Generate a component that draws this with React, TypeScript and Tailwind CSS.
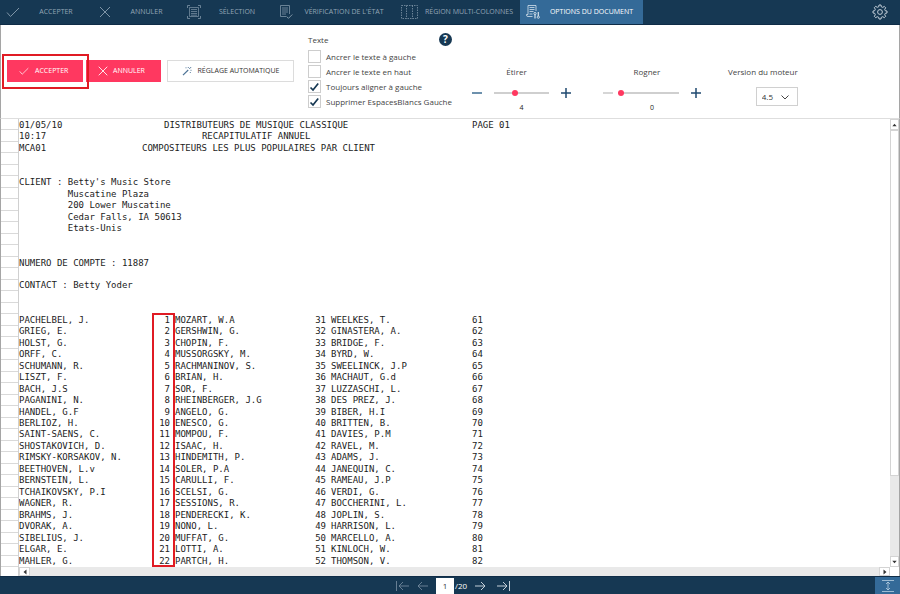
import React, { useState } from 'react';

interface IconProps {
  className?: string;
  children: React.ReactNode;
  box?: string;
}

const Icon: React.FC<IconProps> = ({ className = 'size-3.5', children, box = '0 0 14 14' }) => (
  <svg viewBox={box} className={`shrink-0 ${className}`} fill="none" stroke="currentColor" aria-hidden="true">
    {children}
  </svg>
);

const CheckIcon = ({ className }: { className?: string }) => (
  <Icon className={className}><path d="M1 7.5 4.5 11.5 13 3" /></Icon>
);

const CrossIcon = ({ className }: { className?: string }) => (
  <Icon className={className}><path d="M2 2 12 12M12 2 2 12" /></Icon>
);

const SelectionIcon = () => (
  <Icon>
    <path d="M2.5 2.5h9v9h-9zM4 4.5h6M4 6.5h6M4 8.5h6M4 10.2h6" strokeWidth="0.7" />
    <path d="M.5 3V.5H3M11 .5h2.5V3M.5 11v2.5H3M11 13.5h2.5V11" strokeWidth="0.8" />
  </Icon>
);

const VerifyIcon = () => (
  <Icon>
    <path d="M7 11.5H1.5v-11h9V9M3 3h6M3 5h6M3 7h6M3 9h4" strokeWidth="0.8" />
    <path d="M7.5 11.5 9.5 13.3 13.3 9.5" />
  </Icon>
);

const ColumnsIcon = () => (
  <Icon className="w-[17px] h-3.5" box="0 0 17 14">
    <path d="M.5.5h16v13H.5zM5.5.5v13M11.5.5v13" strokeDasharray="1.5 1" strokeWidth="0.8" />
  </Icon>
);

const OptionsIcon = () => (
  <Icon>
    <path d="M6.500 11.500H2A1.500 1.500 0 0 1 .5 10V9.500H2M2 9.500V.5h8V6M3.500 2.500h5M3.500 4.500h5M3.500 6.500h4M3.500 9h3" strokeWidth="0.8" />
    <path d="M9 9.500v4M12.300 7v4" strokeWidth="1.200" />
    <circle cx="9" cy="8.500" r="1.100" strokeWidth="0.9" />
    <circle cx="12.300" cy="12.200" r="1.100" strokeWidth="0.9" />
  </Icon>
);

const GearIcon = () => (
  <Icon className="size-4" box="0 0 16 16">
    <path
      d="M6.700 2.800 7 1h2l.3 1.800 1.500.6 1.500-1 1.400 1.400-1 1.500.6 1.500L15 7v2l-1.700.3-.6 1.500 1 1.500-1.400 1.400-1.500-1-1.500.6L9 15H7l-.3-1.700-1.500-.6-1.500 1-1.400-1.400 1-1.500-.6-1.500L1 9V7l1.700-.3.600-1.500-1-1.500 1.400-1.400 1.500 1z"
      strokeLinejoin="round"
    />
    <circle cx="8" cy="8" r="2.400" />
  </Icon>
);

const WandIcon = () => (
  <Icon className="size-2.5 text-[#4d7396]" box="0 0 10 10">
    <path d="M1 9.200 6.200 4" strokeWidth="1.200" />
    <path d="M7.200 3 9.200 1M3.500 1.800h1M6.300 1v1M8.500 4.300h1M8.300 6v1" strokeWidth="0.9" />
  </Icon>
);

const tabs = [
  { label: 'ACCEPTER', icon: <CheckIcon />, width: 'w-[92px]' },
  { label: 'ANNULER', icon: <CrossIcon />, width: 'w-[89px]' },
  { label: 'SÉLECTION', icon: <SelectionIcon />, width: 'w-[92px]' },
  { label: "VÉRIFICATION DE L'ÉTAT", icon: <VerifyIcon />, width: 'w-[122px]' },
  { label: 'RÉGION MULTI-COLONNES', icon: <ColumnsIcon />, width: 'w-[125px]' },
  { label: 'OPTIONS DU DOCUMENT', icon: <OptionsIcon />, width: 'w-[123px]', active: true },
];

const textOptions = [
  { label: 'Ancrer le texte à gauche', checked: false },
  { label: 'Ancrer le texte en haut', checked: false },
  { label: 'Toujours aligner à gauche', checked: true },
  { label: 'Supprimer EspacesBlancs Gauche', checked: true },
];

const headerLines = [
  ['01/05/10', 'DISTRIBUTEURS DE MUSIQUE CLASSIQUE', 'PAGE 01'],
  ['10:17', '       RECAPITULATIF ANNUEL', ''],
  ['MCA01', 'COMPOSITEURS LES PLUS POPULAIRES PAR CLIENT', ''],
];

const clientLines = [
  '',
  '',
  "CLIENT : Betty's Music Store",
  '         Muscatine Plaza',
  '         200 Lower Muscatine',
  '         Cedar Falls, IA 50613',
  '         Etats-Unis',
  '',
  '',
  'NUMERO DE COMPTE : 11887',
  '',
  'CONTACT : Betty Yoder',
  '',
  '',
];

const composers = [
  ['PACHELBEL, J.', 'MOZART, W.A', 'WEELKES, T.'],
  ['GRIEG, E.', 'GERSHWIN, G.', 'GINASTERA, A.'],
  ['HOLST, G.', 'CHOPIN, F.', 'BRIDGE, F.'],
  ['ORFF, C.', 'MUSSORGSKY, M.', 'BYRD, W.'],
  ['SCHUMANN, R.', 'RACHMANINOV, S.', 'SWEELINCK, J.P'],
  ['LISZT, F.', 'BRIAN, H.', 'MACHAUT, G.d'],
  ['BACH, J.S', 'SOR, F.', 'LUZZASCHI, L.'],
  ['PAGANINI, N.', 'RHEINBERGER, J.G', 'DES PREZ, J.'],
  ['HANDEL, G.F', 'ANGELO, G.', 'BIBER, H.I'],
  ['BERLIOZ, H.', 'ENESCO, G.', 'BRITTEN, B.'],
  ['SAINT-SAENS, C.', 'MOMPOU, F.', 'DAVIES, P.M'],
  ['SHOSTAKOVICH, D.', 'ISAAC, H.', 'RAVEL, M.'],
  ['RIMSKY-KORSAKOV, N.', 'HINDEMITH, P.', 'ADAMS, J.'],
  ['BEETHOVEN, L.v', 'SOLER, P.A', 'JANEQUIN, C.'],
  ['BERNSTEIN, L.', 'CARULLI, F.', 'RAMEAU, J.P'],
  ['TCHAIKOVSKY, P.I', 'SCELSI, G.', 'VERDI, G.'],
  ['WAGNER, R.', 'SESSIONS, R.', 'BOCCHERINI, L.'],
  ['BRAHMS, J.', 'PENDERECKI, K.', 'JOPLIN, S.'],
  ['DVORAK, A.', 'NONO, L.', 'HARRISON, L.'],
  ['SIBELIUS, J.', 'MUFFAT, G.', 'MARCELLO, A.'],
  ['ELGAR, E.', 'LOTTI, A.', 'KINLOCH, W.'],
  ['MAHLER, G.', 'PARTCH, H.', 'THOMSON, V.'],
];

interface StepSliderProps {
  label: string;
  max: number;
  initial: number;
  trackClass: string;
}

const StepSlider: React.FC<StepSliderProps> = ({ label, max, initial, trackClass }) => {
  const [value, setValue] = useState(initial);
  const id = `slider-${label}`;

  return (
    <div className="flex flex-col items-center pt-[41px]">
      <label htmlFor={id} className="h-3 pr-2.5 leading-3">{label}</label>
      <div className="mt-2 flex h-3.5 items-center text-[#1f4a70]">
        <button
          type="button"
          aria-label={`${label} moins`}
          disabled={value === 0}
          onClick={() => setValue(value - 1)}
          className="text-[#3c6c92] disabled:text-[#c9c9c9]"
        >
          <Icon className="size-2.5" box="0 0 10 10"><path d="M0 5h10" strokeWidth="1.500" /></Icon>
        </button>
        <input
          id={id}
          type="range"
          min={0}
          max={max}
          value={value}
          onChange={(e) => setValue(Number(e.target.value))}
          className={`${trackClass} mr-3 h-0.5 appearance-none bg-[#cfcfcf] [&::-webkit-slider-thumb]:size-1.5 [&::-webkit-slider-thumb]:appearance-none [&::-webkit-slider-thumb]:rounded-full [&::-webkit-slider-thumb]:bg-[#ff3860]`}
        />
        <button type="button" aria-label={`${label} plus`} onClick={() => setValue(Math.min(max, value + 1))}>
          <Icon className="size-2.5" box="0 0 10 10"><path d="M0 5h10M5 0v10" strokeWidth="1.500" /></Icon>
        </button>
      </div>
      <output htmlFor={id} className="mt-0.5 text-[7px] leading-3 text-[#222]">{value}</output>
    </div>
  );
};

const TopBar = () => (
  <header className="flex h-[25px] shrink-0 items-stretch border-b border-[#0f2c47] bg-[#163853] text-[7px] text-[#93a6b6]">
    <nav className="flex">
      {tabs.map((tab) => (
        <button
          key={tab.label}
          type="button"
          className={`${tab.width} flex items-center whitespace-nowrap pl-1.5 ${tab.active ? 'bg-[#346a98] text-white' : ''}`}
        >
          <span className={tab.active ? 'text-[#d5e2ec]' : 'text-[#7f95a7]'}>{tab.icon}</span>
          <span className="flex-1 pt-px text-center">{tab.label}</span>
        </button>
      ))}
    </nav>
    <button type="button" aria-label="Paramètres" className="ml-auto mr-3 text-[#c3ced8]">
      <GearIcon />
    </button>
  </header>
);

const Ribbon = () => (
  <section className="flex h-[93px] shrink-0 border-x border-[#a5a5a5] bg-white text-[8px] text-[#444]">
    <div className="flex pl-px pt-[29px] text-[7px]">
      <div className="relative z-10 h-[35px] w-[87px] border-2 border-[#e01b24] p-[3px] pt-1">
        <button type="button" className="flex h-[22px] w-[76px] items-center gap-1.5 bg-[#ff3860] pl-3 text-white">
          <CheckIcon className="size-2.5" />
          ACCEPTER
        </button>
      </div>
      <button type="button" className="-ml-[3px] mt-1.5 flex h-[22px] w-[75px] items-center gap-1 bg-[#ff3860] pl-[11px] text-white">
        <CrossIcon className="size-3" />
        ANNULER
      </button>
      <button type="button" className="ml-1.5 mt-1.5 flex h-[22px] w-[127px] items-center justify-center gap-1.5 border border-[#dcdcdc] text-[#333]">
        <WandIcon />
        RÉGLAGE AUTOMATIQUE
      </button>
    </div>

    <fieldset className="ml-3.5 w-[150px] pt-[7px]">
      <div className="mb-0.5 flex h-[15px] items-center justify-between pr-1.5">
        <span>Texte</span>
        <button type="button" aria-label="Aide" className="size-[13px] rounded-full bg-[#163853] text-center text-[10px] font-bold leading-[13px] text-white">
          ?
        </button>
      </div>
      {textOptions.map((option) => (
        <label key={option.label} className="flex h-[15px] items-center gap-[5px] whitespace-nowrap">
          <span className="grid size-[13px] shrink-0">
            <input
              type="checkbox"
              defaultChecked={option.checked}
              className="peer col-start-1 row-start-1 size-[13px] appearance-none border border-[#cdcdcd] bg-white"
            />
            <svg viewBox="0 0 13 13" className="pointer-events-none invisible col-start-1 row-start-1 text-[#163853] peer-checked:visible" fill="none" stroke="currentColor" strokeWidth="1.700">
              <path d="M2.500 7.500 5 10 10.200 3.500" />
            </svg>
          </span>
          {option.label}
        </label>
      ))}
    </fieldset>

    <div className="ml-3.5"><StepSlider label="Étirer" max={11} initial={4} trackClass="ml-3 w-[55px]" /></div>
    <div className="ml-8"><StepSlider label="Rogner" max={11} initial={0} trackClass="ml-[5px] w-[61px]" /></div>

    <div className="ml-[27px] flex flex-col items-end pt-[41px]">
      <label htmlFor="engine" className="whitespace-nowrap leading-3">Version du moteur</label>
      <div className="mt-[9px] grid h-[19px] w-[42px] items-center border border-[#d0d0d0]">
        <select id="engine" className="col-start-1 row-start-1 h-full appearance-none bg-transparent pl-[5px] text-[#333]">
          <option>4.5</option>
          <option>4.0</option>
        </select>
        <svg viewBox="0 0 8 8" className="pointer-events-none col-start-1 row-start-1 mr-2 size-2 justify-self-end" fill="none" stroke="currentColor">
          <path d="M.5 2.500 4 6l3.500-3.500" />
        </svg>
      </div>
    </div>
  </section>
);

const Arrow = ({ d }: { d: string }) => (
  <svg viewBox="0 0 8 8" className="size-2 text-[#333]" fill="currentColor" aria-hidden="true"><path d={d} /></svg>
);

const scrollButton = 'flex shrink-0 items-center justify-center border border-[#d4d4d4] bg-white';

const Report = () => (
  <main className="grid min-h-0 flex-1 grid-cols-[18px_minmax(0,1fr)_9px] grid-rows-[minmax(0,1fr)_9px] border-x border-t border-[#a5a5a5] border-t-[#dedede] bg-white">
    <div className="row-span-2 flex flex-col border-r border-[#d0d0d0]">
      <div className="grid flex-1 grid-rows-[repeat(39,minmax(0,1fr))]">
        {Array.from({ length: 39 }, (_, i) => (
          <div key={i} className="border-b border-[#d9d9d9]" />
        ))}
      </div>
      <div className="h-[9px]" />
    </div>

    <article className="grid min-h-0 grid-rows-[repeat(39,minmax(0,1fr))] overflow-hidden whitespace-pre pt-px font-['DejaVu_Sans_Mono',monospace] text-[9px] leading-[11px] text-[#1c1c1c]">
      {headerLines.map(([left, title, page], i) => (
        <div key={left} className="grid grid-cols-[145px_308px_1fr]">
          <span>{left}</span>
          <span className={i === 2 ? '-ml-[22px]' : ''}>{title}</span>
          <span>{page}</span>
        </div>
      ))}
      {clientLines.map((line, i) => (
        <div key={i}>{line}</div>
      ))}
      <table className="relative row-span-22 grid min-h-0">
        <tbody className="grid grid-rows-[repeat(22,minmax(0,1fr))]">
          {composers.map(([first, second, third], i) => (
            <tr key={first} className="grid grid-cols-[134px_17px_5px_140px_11px_5px_141px_1fr]">
              <td>{first}</td>
              <td className="text-right">{i + 1}</td>
              <td />
              <td>{second}</td>
              <td className="text-right">{i + 31}</td>
              <td />
              <td>{third}</td>
              <td>{i + 61}</td>
            </tr>
          ))}
        </tbody>
        <caption className="pointer-events-none absolute -top-0.5 bottom-0 left-[133px] w-[23px] border-2 border-[#e01b24]" />
      </table>
    </article>

    <div className="flex flex-col bg-[#e9e9e9]">
      <button type="button" aria-label="Défiler vers le haut" className={`${scrollButton} h-[11px]`}><Arrow d="M1.500 5.500h5L4 2.500z" /></button>
      <div className="h-[346px] border border-[#d4d4d4] bg-white" />
      <button type="button" aria-label="Défiler vers le bas" className={`${scrollButton} mt-auto h-[11px]`}><Arrow d="M1.500 2.500h5L4 5.500z" /></button>
    </div>

    <div className="flex justify-between bg-[#e9e9e9]">
      <button type="button" aria-label="Défiler à gauche" className={`${scrollButton} w-[11px]`}><Arrow d="M5.500 1.500v5L2.500 4z" /></button>
      <button type="button" aria-label="Défiler à droite" className={`${scrollButton} w-[11px]`}><Arrow d="M2.500 1.500v5L5.500 4z" /></button>
    </div>
  </main>
);

const Pager = () => (
  <footer className="grid h-[18px] shrink-0 grid-cols-[1fr_auto_1fr] items-center border-t border-[#0f2c47] bg-[#163853] text-[8px] text-white">
    <span />
    <div className="flex items-center gap-2 pl-1.5 text-[#c3ced8]">
      <button type="button" aria-label="Première page" className="text-[#6f879b]">
        <Icon className="h-2.5 w-[13px]" box="0 0 13 10"><path d="M.5 0v10M3 5h10M7 1 3 5l4 4" strokeWidth="0.9" /></Icon>
      </button>
      <button type="button" aria-label="Page précédente" className="text-[#6f879b]">
        <Icon className="h-2.5 w-[11px]" box="0 0 11 10"><path d="M1 5h10M5 1 1 5l4 4" strokeWidth="0.9" /></Icon>
      </button>
      <div className="flex items-center gap-px text-white">
        <input aria-label="Page" defaultValue="1" className="h-4 w-[18px] bg-white text-center text-[#333]" />
        <span>/20</span>
      </div>
      <button type="button" aria-label="Page suivante">
        <Icon className="h-2.5 w-[11px]" box="0 0 11 10"><path d="M0 5h10M6 1l4 4-4 4" /></Icon>
      </button>
      <button type="button" aria-label="Dernière page" className="ml-[3px]">
        <Icon className="h-2.5 w-[13px]" box="0 0 13 10"><path d="M12.500 0v10M0 5h10M6 1l4 4-4 4" /></Icon>
      </button>
    </div>
    <button type="button" aria-label="Ajuster la hauteur" className="flex h-full w-[25px] items-center justify-center justify-self-end bg-[#346a98] text-[#b9d0e2]">
      <Icon className="h-3 w-3" box="0 0 12 12"><path d="M0 .5h12M0 11.500h12M6 2v8M4 4l2-2 2 2M4 8l2 2 2-2" strokeWidth="0.8" /></Icon>
    </button>
  </footer>
);

const App: React.FC = () => {
  return (
    <div className="flex h-screen flex-col overflow-hidden bg-white font-['Open_Sans','Noto_Sans',sans-serif]">
      <TopBar />
      <Ribbon />
      <Report />
      <Pager />
    </div>
  );
};

export default App;
